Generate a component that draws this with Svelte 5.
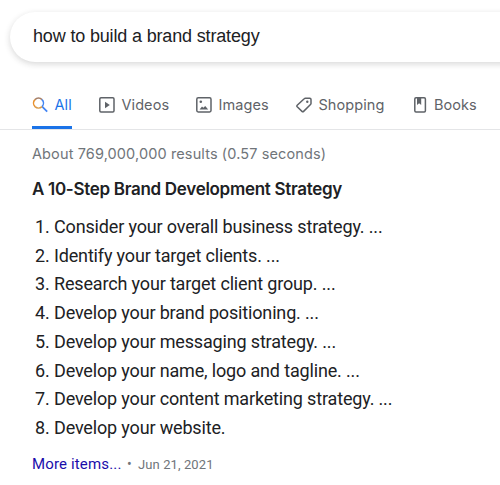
<script>
  const query = "how to build a brand strategy";

  const tabs = [
    { name: "All", icon: "search", active: true },
    { name: "Videos", icon: "video" },
    { name: "Images", icon: "image" },
    { name: "Shopping", icon: "tag" },
    { name: "Books", icon: "book" },
  ];

  const steps = [
    "Consider your overall business strategy. ...",
    "Identify your target clients. ...",
    "Research your target client group. ...",
    "Develop your brand positioning. ...",
    "Develop your messaging strategy. ...",
    "Develop your name, logo and tagline. ...",
    "Develop your content marketing strategy. ...",
    "Develop your website.",
  ];
</script>

<div class="page">
  <div class="search-box"><span>{query}</span></div>

  <nav class="tabs">
    {#each tabs as tab}
      <div class="tab {tab.icon}" class:active={tab.active}>
        <svg width="16" height="16" viewBox="0 0 16 16" fill="none" stroke="currentColor">
          {#if tab.icon === "search"}
            <path d="M10.2 9.6 15.2 14.6" stroke="#4285f4" stroke-width="1.8" />
            <path d="M3 9.6A5 5 0 0 1 3 2.6" stroke="#e8912d" stroke-width="1.6" />
            <path d="M3 2.6A5 5 0 0 1 10 2.6" stroke="#a57f68" stroke-width="1.6" />
            <path d="M10 2.6A5 5 0 0 1 10 9.6" stroke="#4285f4" stroke-width="1.6" />
            <path d="M10 9.6A5 5 0 0 1 3 9.6" stroke="#d99b4a" stroke-width="1.6" />
          {:else if tab.icon === "video"}
            <rect x="0.8" y="0.8" width="14.2" height="14.2" rx="1.2" stroke-width="1.5" />
            <path d="M6 4.8v6.4L10.8 8z" fill="currentColor" stroke="none" />
          {:else if tab.icon === "image"}
            <rect x="0.8" y="0.8" width="14.2" height="14.2" rx="1.4" stroke-width="1.5" />
            <circle cx="4.8" cy="4.8" r="1.3" fill="currentColor" stroke="none" />
            <path d="M3.6 12.4 6 9.6l1.4 1.2L9.2 9l3 3.4z" fill="currentColor" stroke="none" />
          {:else if tab.icon === "tag"}
            <path d="M9.4 1.2h4.4q1.2 0 1.2 1.2v4q0 .6-.5 1.1L7.6 14.4q-.8.8-1.6 0L1.2 9.8q-.7-.8 0-1.6L8.2 1.7q.5-.5 1.2-.5z" stroke-width="1.5" />
            <circle cx="11.3" cy="4.8" r="1.2" fill="currentColor" stroke="none" />
          {:else}
            <rect x="2.8" y="0.8" width="10.6" height="14.2" rx="1.2" stroke-width="1.5" />
            <path d="M5 1h4.2v7L7.1 6.3 5 8z" fill="currentColor" stroke="none" />
          {/if}
        </svg>
        <span>{tab.name}</span>
      </div>
    {/each}
  </nav>

  <main>
    <div class="stats">About 769,000,000 results (0.57 seconds)</div>
    <h1>A 10-Step Brand Development Strategy</h1>
    <ol>
      {#each steps as step, i}
        <li><span class="number">{i + 1}.</span><span>{step}</span></li>
      {/each}
    </ol>
    <div class="footer">
      <span class="more">More items...</span>
      <span class="dot">•</span>
      <span class="date">Jun 21, 2021</span>
    </div>
  </main>
</div>

<style>
  :global(body) {
    background: #fff;
    overflow: hidden;
  }

  .page {
    width: 500px;
    height: 485px;
    overflow: hidden;
    color: #202124;
    font-family: Roboto, sans-serif;
    white-space: nowrap;
  }

  .search-box {
    box-sizing: border-box;
    width: 560px;
    height: 50px;
    margin: 12px 0 0 10px;
    padding-left: 23px;
    border-radius: 25px;
    box-shadow: 0 2px 6px rgba(32, 33, 36, 0.18);
    font: 18px/48px "Liberation Sans", Arial, sans-serif;
    letter-spacing: -0.16px;
  }

  .tabs {
    display: flex;
    box-sizing: border-box;
    height: 48px;
    margin-top: 20px;
    padding-left: 32px;
    border-bottom: 1px solid #e4e5e7;
    color: #5f6368;
    font: 14.5px/20px Inter, sans-serif;
    letter-spacing: 0.07px;
  }

  .tab {
    display: flex;
    box-sizing: border-box;
    flex: none;
    height: 47px;
    padding-top: 13px;
    gap: 6.5px;
  }

  .tab svg {
    margin-top: 2px;
  }

  .search {
    width: 40px;
    margin-right: 27px;
  }

  .video {
    width: 97px;
  }

  .image {
    width: 100px;
  }

  .tag {
    width: 115.5px;
  }

  .active {
    border-bottom: 3px solid #1a73e8;
    color: #1a73e8;
  }

  main {
    padding-left: 32px;
  }

  .stats {
    margin-top: 14px;
    color: #70757a;
    font: 14.5px/20px Inter, sans-serif;
    letter-spacing: 0.12px;
  }

  h1 {
    margin: 13px 0 0;
    font: 600 17px/24px Inter, sans-serif;
    letter-spacing: -0.3px;
  }

  ol {
    margin: 12px 0 0;
    padding: 0 0 0 3px;
    list-style: none;
    font-size: 18px;
    line-height: 28.7px;
    letter-spacing: -0.16px;
  }

  li {
    display: flex;
  }

  .number {
    width: 19px;
  }

  .footer {
    display: flex;
    align-items: baseline;
    margin-top: 11px;
    line-height: 20px;
  }

  .more {
    width: 95px;
    color: #1a0dab;
    font-size: 15px;
    letter-spacing: 0.15px;
  }

  .dot {
    width: 11px;
    color: #70757a;
    font-size: 14px;
  }

  .date {
    color: #70757a;
    font-size: 13px;
    letter-spacing: 0.1px;
  }
</style>
